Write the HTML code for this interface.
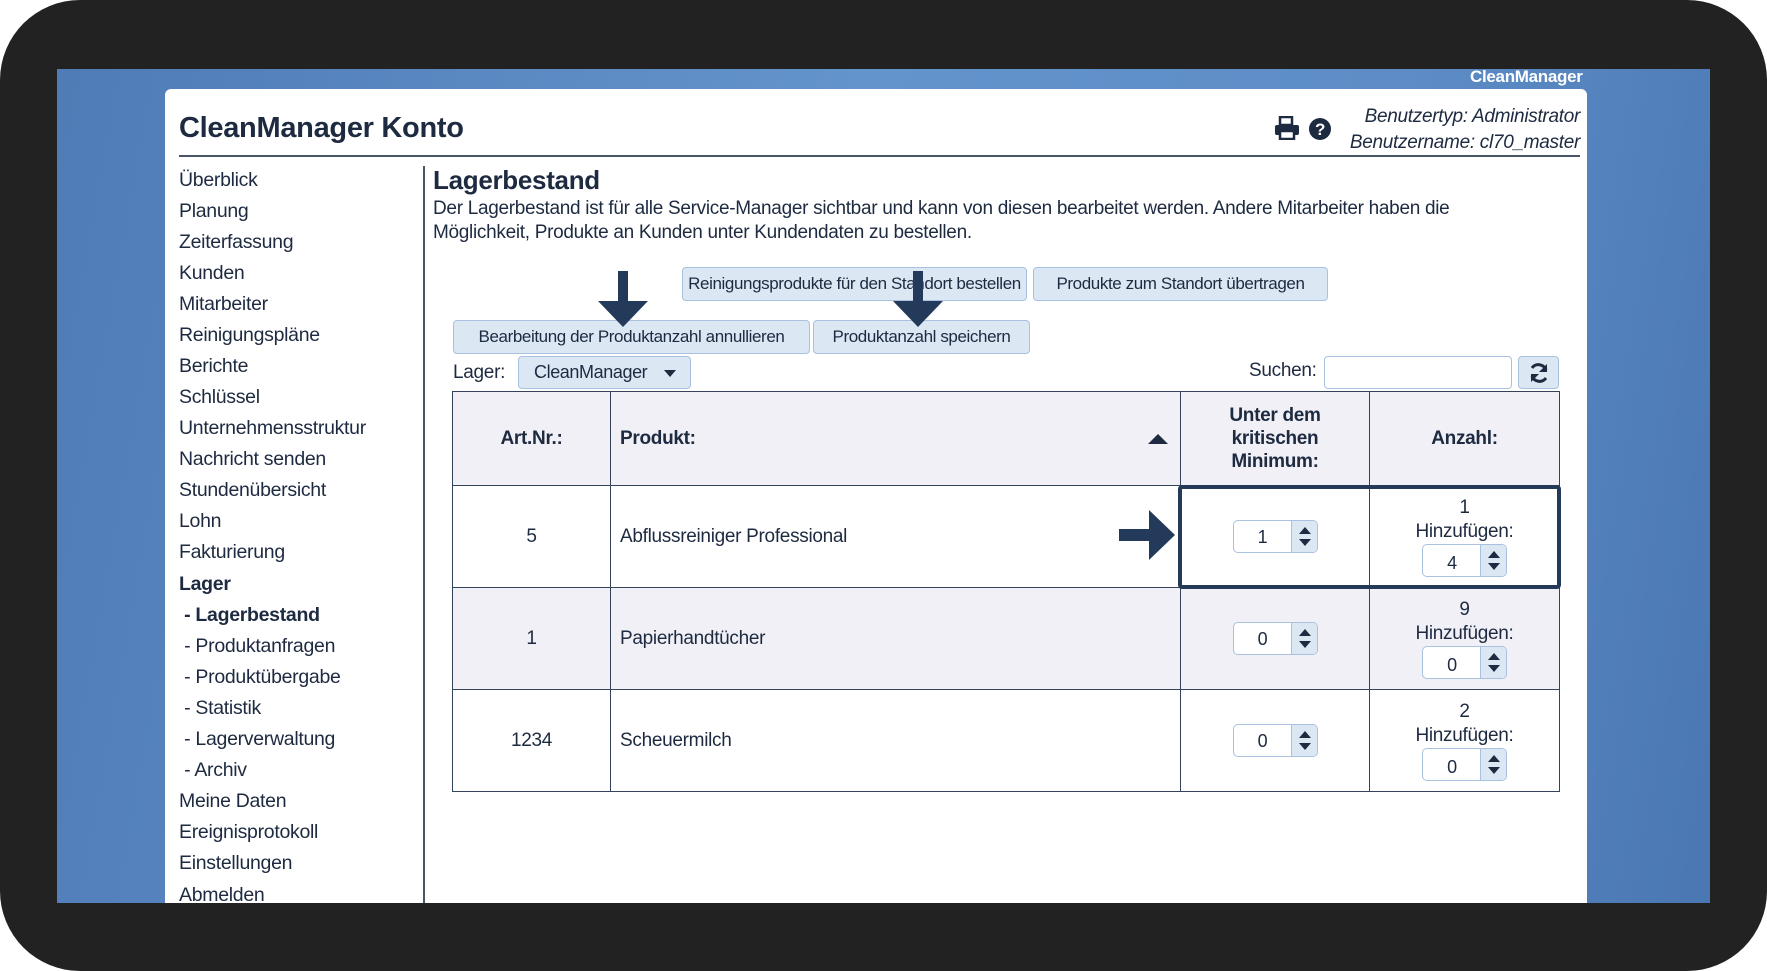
<!DOCTYPE html>
<html><head><meta charset="utf-8">
<style>
*{margin:0;padding:0;box-sizing:border-box}
body{width:1767px;height:971px;background:#fff;position:relative;overflow:hidden;font-family:"Liberation Sans",Arial,sans-serif;color:#1d2a40;letter-spacing:-0.3px}
.frame{position:absolute;left:0;top:0;width:1767px;height:971px;background:#222223;border-radius:80px}
.blue{position:absolute;left:57px;top:69px;width:1653px;height:834px;background:linear-gradient(100deg,#4f7bb6 0%,#6494cc 45%,#5d8cc6 75%,#4a77b2 100%)}
.panel{position:absolute;left:165px;top:89px;width:1422px;height:814px;background:#fff;border-radius:6px 6px 0 0}
.a{position:absolute;white-space:nowrap}
.nav div{position:absolute;left:179px;font-size:19.5px;white-space:nowrap}
.btn{position:absolute;background:#dce7f4;border:1px solid #a9c1de;border-radius:4px;font-size:17px;letter-spacing:-0.4px;display:flex;align-items:center;justify-content:center;white-space:nowrap;overflow:hidden}
table{position:absolute;left:452px;top:391px;width:1108px;border-collapse:collapse}
td{border:1.5px solid #35435a;font-size:19px;text-align:center;vertical-align:middle}
.h td{background:#f0f0f6;font-weight:bold}
.g td{background:#f0f0f6}
.spin{display:inline-block;position:relative;width:85px;height:33px;border:1px solid #a9c1de;border-radius:5px;background:#fff;vertical-align:middle;text-align:left}
.spin span{position:absolute;left:0;width:58px;text-align:center;top:6px;font-size:18px}
.spin i{position:absolute;right:0;top:0;width:26px;height:31px;background:#dce7f4;border-left:1px solid #a9c1de;border-radius:0 4px 4px 0}
.spin i:before{content:"";position:absolute;left:7px;top:6px;border:6px solid transparent;border-bottom:7px solid #1d2a40;border-top:0}
.spin i:after{content:"";position:absolute;left:7px;top:18px;border:6px solid transparent;border-top:7px solid #1d2a40;border-bottom:0}
</style></head><body>
<div class="frame"></div>
<div class="blue"></div>
<div class="a" style="left:1470px;top:67px;color:#fff;font-weight:bold;font-size:17px">CleanManager</div>
<div class="panel"></div>
<div class="a" style="left:179px;top:112px;font-size:29px;font-weight:bold">CleanManager Konto</div>
<div class="a" style="left:179px;top:155px;width:1401px;height:2px;background:#4a5568"></div>
<svg class="a" style="left:1274px;top:116px" width="26" height="24" viewBox="0 0 26 24"><rect x="6" y="1" width="12" height="8" fill="none" stroke="#1d2a40" stroke-width="2.5"/><rect x="1" y="9" width="24" height="10" rx="2" fill="#1d2a40"/><rect x="6" y="15" width="14" height="8" fill="#fff" stroke="#1d2a40" stroke-width="2.5"/></svg>
<svg class="a" style="left:1308px;top:117px" width="24" height="24" viewBox="0 0 24 24"><circle cx="12" cy="12" r="11" fill="#1d2a40"/><text x="12" y="18" text-anchor="middle" font-family="Liberation Sans" font-weight="bold" font-size="17" fill="#fff">?</text></svg>
<div class="a" style="right:187px;top:106px;font-style:italic;font-size:19px;text-align:right">Benutzertyp: Administrator</div>
<div class="a" style="right:187px;top:132px;font-style:italic;font-size:19px;text-align:right">Benutzername: cl70_master</div>
<div class="nav">
<div style="top:169px">Überblick</div><div style="top:200px">Planung</div><div style="top:231px">Zeiterfassung</div><div style="top:262px">Kunden</div><div style="top:293px">Mitarbeiter</div><div style="top:324px">Reinigungspläne</div><div style="top:355px">Berichte</div><div style="top:386px">Schlüssel</div><div style="top:417px">Unternehmensstruktur</div><div style="top:448px">Nachricht senden</div><div style="top:479px">Stundenübersicht</div><div style="top:510px">Lohn</div><div style="top:541px">Fakturierung</div><div style="top:573px;font-weight:bold">Lager</div><div style="top:604px;font-weight:bold">&nbsp;- Lagerbestand</div><div style="top:635px">&nbsp;- Produktanfragen</div><div style="top:666px">&nbsp;- Produktübergabe</div><div style="top:697px">&nbsp;- Statistik</div><div style="top:728px">&nbsp;- Lagerverwaltung</div><div style="top:759px">&nbsp;- Archiv</div><div style="top:790px">Meine Daten</div><div style="top:821px">Ereignisprotokoll</div><div style="top:852px">Einstellungen</div><div style="top:884px">Abmelden</div>
</div>
<div class="a" style="left:423px;top:166px;width:1.5px;height:737px;background:#4a5568"></div>
<div class="a" style="left:433px;top:165px;font-size:26px;font-weight:bold">Lagerbestand</div>
<div class="a" style="left:433px;top:197px;font-size:19px;line-height:24px">Der Lagerbestand ist für alle Service-Manager sichtbar und kann von diesen bearbeitet werden. Andere Mitarbeiter haben die<br>Möglichkeit, Produkte an Kunden unter Kundendaten zu bestellen.</div>
<div class="btn" style="left:682px;top:267px;width:345px;height:34px">Reinigungsprodukte für den Standort bestellen</div>
<div class="btn" style="left:1033px;top:267px;width:295px;height:34px">Produkte zum Standort übertragen</div>
<div class="btn" style="left:453px;top:320px;width:357px;height:34px">Bearbeitung der Produktanzahl annullieren</div>
<div class="btn" style="left:813px;top:320px;width:217px;height:34px">Produktanzahl speichern</div>
<svg class="a" style="left:598px;top:271px" width="50" height="56" viewBox="0 0 50 56"><rect x="20" y="0" width="10" height="32" fill="#243a5a"/><polygon points="0,30 50,30 25,56" fill="#243a5a"/></svg>
<svg class="a" style="left:893px;top:271px" width="50" height="56" viewBox="0 0 50 56"><rect x="20" y="0" width="10" height="32" fill="#243a5a"/><polygon points="0,30 50,30 25,56" fill="#243a5a"/></svg>
<div class="a" style="left:453px;top:362px;font-size:19px">Lager:</div>
<div class="btn" style="left:518px;top:356px;width:173px;height:33px;justify-content:flex-start;padding-left:15px;font-size:18px">CleanManager<span style="position:absolute;right:14px;top:13px;border:6px solid transparent;border-top:7px solid #1d2a40;border-bottom:0"></span></div>
<div class="a" style="left:1249px;top:360px;font-size:19px">Suchen:</div>
<div class="a" style="left:1324px;top:356px;width:188px;height:33px;border:1px solid #a9c1de;border-radius:4px"></div>
<div class="btn" style="left:1518px;top:356px;width:41px;height:33px"><svg width="22" height="22" viewBox="0 0 22 22"><path d="M18 8A8 8 0 0 0 4 6" fill="none" stroke="#1d2a40" stroke-width="3"/><polygon points="19,2 19,10 11,10" fill="#1d2a40"/><path d="M4 14A8 8 0 0 0 18 16" fill="none" stroke="#1d2a40" stroke-width="3"/><polygon points="3,20 3,12 11,12" fill="#1d2a40"/></svg></div>
<table>
<tr class="h" style="height:94px"><td style="width:158px">Art.Nr.:</td><td style="text-align:left;padding-left:9px;position:relative;width:570px">Produkt:<span style="position:absolute;right:12px;top:42px;border:10px solid transparent;border-bottom:10px solid #1d2a40;border-top:0"></span></td><td style="width:189px;line-height:23px">Unter dem<br>kritischen<br>Minimum:</td><td>Anzahl:</td></tr>
<tr style="height:102px"><td>5</td><td style="text-align:left;padding-left:9px">Abflussreiniger Professional</td><td><span class="spin"><span>1</span><i></i></span></td><td style="line-height:24px">1<br>Hinzufügen:<br><span class="spin"><span>4</span><i></i></span></td></tr>
<tr class="g" style="height:102px"><td>1</td><td style="text-align:left;padding-left:9px">Papierhandtücher</td><td><span class="spin"><span>0</span><i></i></span></td><td style="line-height:24px">9<br>Hinzufügen:<br><span class="spin"><span>0</span><i></i></span></td></tr>
<tr style="height:102px"><td>1234</td><td style="text-align:left;padding-left:9px">Scheuermilch</td><td><span class="spin"><span>0</span><i></i></span></td><td style="line-height:24px">2<br>Hinzufügen:<br><span class="spin"><span>0</span><i></i></span></td></tr>
</table>
<div class="a" style="left:1178px;top:485px;width:383px;height:104px;border:4px solid #253a58;border-radius:4px"></div>
<svg class="a" style="left:1119px;top:510px" width="56" height="50" viewBox="0 0 56 50"><rect x="0" y="19" width="32" height="12" fill="#243a5a"/><polygon points="30,0 56,25 30,50" fill="#243a5a"/></svg>
</body></html>
